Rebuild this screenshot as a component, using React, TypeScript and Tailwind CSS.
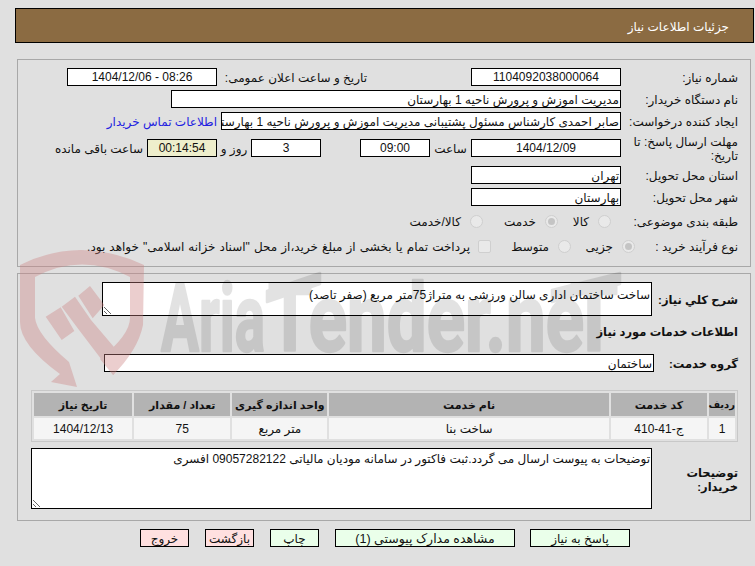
import React from "react";

function Field({ w, children, center = false, className = "" }: { w: string; children?: React.ReactNode; center?: boolean; className?: string }) {
  return (
    <div className={`${w} ${center ? "justify-center" : "justify-start pr-px pt-[2px]"} flex h-[18px] shrink-0 items-center overflow-hidden whitespace-nowrap border border-black bg-white ${className}`}>
      {children}
    </div>
  );
}

function Label({ className = "", children }: { className?: string; children: React.ReactNode }) {
  return <div className={`shrink-0 pt-[2px] ${className}`}>{children}</div>;
}

function Radio({ checked = false, className = "" }: { checked?: boolean; className?: string }) {
  return (
    <span className={`flex h-[13px] w-[13px] shrink-0 items-center justify-center rounded-full border border-[#cfcfcf] bg-[#e9e9e9] ${className}`}>
      {checked && <span className="h-[7px] w-[7px] rounded-full bg-[#c4c4c4]" />}
    </span>
  );
}

function Watermark() {
  return (
    <svg dir="ltr" className="pointer-events-none absolute left-0 top-0 z-20" width="755" height="566" viewBox="0 0 755 566" aria-hidden="true">
      <g fill="#ce8484" opacity="0.39">
        <path d="M20 265 Q80 235 144 265 L143 325 Q138 350 113 375 L100 359 Q130 335 130 318 L130 277 Q82 252 35 277 L35 318 Q37 335 69 362 L77 387 L51 382 L60 374 Q20 345 20 322 Z" />
        <path d="M45.7 316.7 L60.7 307.3 L74.3 331 L61.7 340 Z M61.7 306.7 L75 296.7 L91 320 L125 360 L113.3 375 L78.3 329 Z M78.3 295.7 L90 286 L104.3 305 L92.7 318.3 Z" />
      </g>
      <g fill="#000000" stroke="#000000" strokeWidth="2.5" strokeLinejoin="round" opacity="0.11" fontFamily="Roboto, sans-serif" fontWeight="700" fontSize="95" direction="ltr">
        <text x="161" y="351" textLength="104" lengthAdjust="spacingAndGlyphs">Aria</text>
        <text x="268" y="351" textLength="316" lengthAdjust="spacingAndGlyphs">Tender.ne</text>
        <text x="570" y="351" textLength="48" lengthAdjust="spacingAndGlyphs">T</text>
        <polygon points="267,291 320,273 320,284 267,302" />
        <polygon points="552,290 620,273 620,284 552,302" />
      </g>
    </svg>
  );
}

const headers = ["ردیف", "کد خدمت", "نام خدمت", "واحد اندازه گیری", "تعداد / مقدار", "تاریخ نیاز"];
const cells = ["1", "ج-41-410", "ساخت بنا", "متر مربع", "75", "1404/12/13"];
const widths = ["w-[26px] text-[10px]", "w-[96px] text-[11px]", "w-[279px] text-[11px]", "w-[95px] text-[11px]", "w-[96px] text-[11px]", "w-[98px] text-[11px]"];

export default function App() {
  return (
    <div dir="rtl" className="relative h-[566px] w-[755px] overflow-hidden bg-[#e0e0e0] font-['Liberation_Sans','DejaVu_Sans',sans-serif] text-[12px] leading-[14px] text-[#111]">
      <div className="relative z-10 pt-2">
        <div className="ml-[15px] mr-px flex h-[35px] items-center border border-black bg-[#8b6b42] pr-[24px] pt-[2px] text-white">
          جزئیات اطلاعات نیاز
        </div>

        <section className="ml-[17px] mr-1 mt-[16px] h-[208px] border border-[#a8a8a8] pr-[12px] pt-2">
          <div className="flex h-[18px] items-center">
            <Label className="w-[117px]">شماره نیاز:</Label>
            <Field w="w-[150px]" center>1104092038000064</Field>
            <Label className="mr-[104px] w-[150px]">تاریخ و ساعت اعلان عمومی:</Label>
            <Field w="w-[150px]" center>08:26 - 1404/12/06</Field>
          </div>
          <div className="mt-1 flex h-[18px] items-center">
            <Label className="w-[117px]">نام دستگاه خریدار:</Label>
            <Field w="w-[450px]">مدیریت اموزش و پرورش ناحیه 1 بهارستان</Field>
          </div>
          <div className="mt-1 flex h-[18px] items-center">
            <Label className="w-[117px] whitespace-nowrap">ایجاد کننده درخواست:</Label>
            <Field w="w-[400px]">صابر احمدی کارشناس مسئول پشتیبانی مدیریت اموزش و پرورش ناحیه 1 بهارستان</Field>
            <a className="mr-1 whitespace-nowrap pt-[2px] text-[#2222e0]">اطلاعات تماس خریدار</a>
          </div>
          <div className="mt-1 flex h-[28px] items-center">
            <Label className="w-[117px]">مهلت ارسال پاسخ: تا تاریخ:</Label>
            <Field w="w-[150px]" center>1404/12/09</Field>
            <Label className="w-[41px] text-center">ساعت</Label>
            <Field w="w-[70px]" center>09:00</Field>
            <Field w="w-[70px] mr-[39px]" center>3</Field>
            <Label className="w-[34px] text-center">روز و</Label>
            <Field w="w-[70px]" center className="bg-[#eeeecc]!">00:14:54</Field>
            <Label className="mr-1 whitespace-nowrap">ساعت باقی مانده</Label>
          </div>
          <div className="mt-1 flex h-[18px] items-center">
            <Label className="w-[117px]">استان محل تحویل:</Label>
            <Field w="w-[150px]">تهران</Field>
          </div>
          <div className="mt-1 flex h-[18px] items-center">
            <Label className="w-[117px]">شهر محل تحویل:</Label>
            <Field w="w-[150px]">بهارستان</Field>
          </div>
          <div className="mt-[4px] flex h-[22px] items-center">
            <Label className="w-[117px]">طبقه بندی موضوعی:</Label>
            <Radio className="mr-[10px]" />
            <Label className="mr-[9px] w-[31px]">کالا</Label>
            <Radio checked />
            <Label className="mr-[9px] w-[53px]">خدمت</Label>
            <Radio />
            <Label className="mr-[9px]">کالا/خدمت</Label>
          </div>
          <div className="mt-[3px] flex h-[22px] items-center">
            <Label className="w-[103px] whitespace-nowrap">نوع فرآیند خرید :</Label>
            <Radio checked />
            <Label className="mr-[9px] w-[42px]">جزیی</Label>
            <Radio />
            <Label className="mr-[9px] w-[58px]">متوسط</Label>
            <span className="h-[13px] w-[13px] shrink-0 rounded-[2px] border border-[#cfcfcf] bg-[#e9e9e9]" />
            <Label className="mr-2 whitespace-nowrap [word-spacing:0.75px]">پرداخت تمام یا بخشی از مبلغ خرید،از محل "اسناد خزانه اسلامی" خواهد بود.</Label>
          </div>
        </section>

        <section className="ml-[17px] mr-1 mt-[6px] h-[248px] border border-[#a8a8a8] pr-[12px] pt-2">
          <div className="flex h-[34px] items-center">
            <Label className="w-[86px] text-[11.5px] font-bold">شرح کلي نياز:</Label>
            <textarea readOnly dir="rtl" className="h-[34px] w-[550px] border border-black bg-white px-px pt-[5px] outline-none" value="ساخت ساختمان اداری سالن ورزشی به متراژ75متر مربع (صفر تاصد)" />
          </div>
          <div className="mt-[8px] h-[14px] pt-px text-[11.5px] font-bold">اطلاعات خدمات مورد نياز</div>
          <div className="mt-[16px] flex h-[18px] items-center">
            <Label className="w-[84px] text-[11.5px] font-bold">گروه خدمت:</Label>
            <Field w="w-[550px]">ساختمان</Field>
          </div>
          <table className="ml-[12px] mt-[18px] w-[707px] table-fixed border-separate border-spacing-[2px] border border-[#c8c8c8]">
            <thead>
              <tr>
                {headers.map((h, i) => (
                  <th key={h} className={`${widths[i]} h-[23px] whitespace-nowrap bg-[#b3b3b3] p-0 text-center font-bold`}>{h}</th>
                ))}
              </tr>
            </thead>
            <tbody>
              <tr>
                {cells.map((c, i) => (
                  <td key={i} className="h-[21px] bg-[#f5f5f5] p-0 text-center">{c}</td>
                ))}
              </tr>
            </tbody>
          </table>
          <div className="mt-[6px] flex h-[61px] items-center">
            <Label className="w-[86px] pl-3 text-[11.5px] font-bold">توضیحات خریدار:</Label>
            <textarea readOnly dir="rtl" className="h-[61px] w-[621px] border border-black bg-white px-px pt-[3px] outline-none" value="توضیحات به پیوست ارسال می گردد.ثبت فاکتور در سامانه مودیان مالیاتی 09057282122 افسری" />
          </div>
        </section>

        <div className="mr-[125px] mt-2 flex h-[18px] items-stretch text-center">
          <button className="w-[100px] border border-black bg-[#eaffea] pt-[2px]">پاسخ به نیاز</button>
          <button className="mr-[15px] w-[180px] border border-black bg-[#eaffea] pt-[2px] text-[12.5px]">مشاهده مدارک پیوستی (1)</button>
          <button className="mr-[16px] w-[49px] border border-black bg-[#eaffea] pt-[2px]">چاپ</button>
          <button className="mr-[16px] w-[49px] border border-black bg-[#ffe0e0] pt-[2px]">بازگشت</button>
          <button className="mr-[16px] w-[49px] border border-black bg-[#ffe0e0] pt-[2px]">خروج</button>
        </div>
      </div>
      <Watermark />
    </div>
  );
}
